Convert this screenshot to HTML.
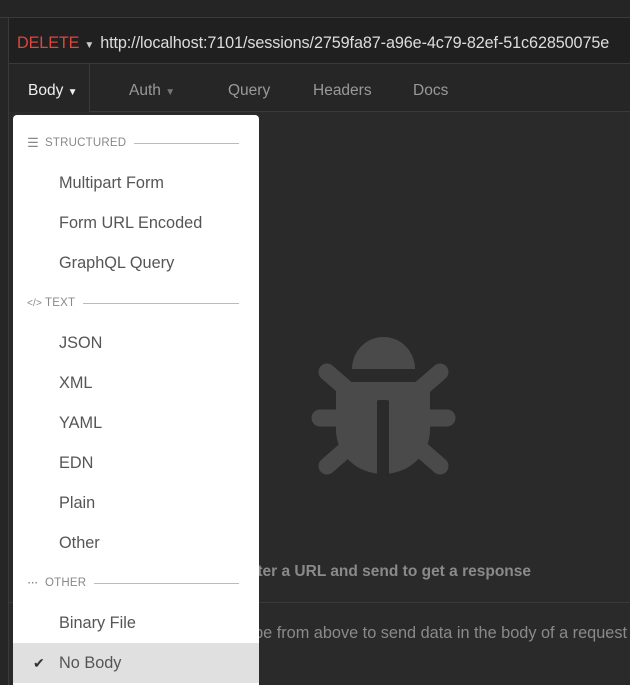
<!DOCTYPE html>
<html><head><meta charset="utf-8"><style>
*{margin:0;padding:0;box-sizing:border-box}
body{width:630px;height:685px;overflow:hidden;background:#2a2a2a;font-family:"Segoe UI","Liberation Sans",sans-serif;position:relative}
.top{position:absolute;left:0;top:0;width:630px;height:18px;background:#252525;border-bottom:1px solid #3a3a3a}
.side{position:absolute;left:0;top:18px;width:9px;height:667px;background:#262626;border-right:1px solid #3a3a3a}
.url{position:absolute;left:9px;top:18px;right:0;height:46px;background:#202020;border-bottom:1px solid #3a3a3a;color:#ddd;font-size:16.2px;line-height:50px;padding-left:8px;white-space:nowrap;letter-spacing:-0.1px}
.url .m{color:#e0453f;margin-right:5px}
.url .c{color:#ccc;font-size:10px;margin-right:6px}
.tabs{position:absolute;left:9px;top:64px;right:0;height:48px;background:#262626}
.tab{position:absolute;top:0;height:48px;line-height:54px;font-size:15.5px;color:#999}
.bline{position:absolute;left:89px;right:0;top:111px;height:1px;background:#3a3a3a}
.msg1{position:absolute;right:99px;top:563px;font-size:15.5px;font-weight:bold;color:#8a8a8a;white-space:nowrap}
.hr{position:absolute;left:9px;right:0;top:602px;height:1px;background:#3a3a3a}
.msg2{position:absolute;right:3px;top:624px;font-size:16.3px;color:#8a8a8a;white-space:nowrap}
.dd{position:absolute;left:13px;top:115px;width:246px;height:570px;background:#fff;border-radius:4px 4px 0 0;padding-top:8px}
.h{height:40px;display:flex;align-items:center;padding-left:14px;font-size:11.5px;color:#888;letter-spacing:.2px}
.h .i{width:12px;margin-right:6px;color:#888;font-size:10px;text-align:center}
.h .l{flex:1;height:1px;background:#bbb;margin:0 20px 0 8px}
.it{height:40px;line-height:41px;padding-left:46px;font-size:16.3px;color:#555}
.sel{background:#e0e0e0;position:relative}
.sel:before{content:"✔";position:absolute;left:20px;color:#333;font-size:14px}
</style></head><body>
<div class="top"></div>
<div class="side"></div>
<div class="url"><span class="m">DELETE</span><span class="c">▼</span>http://localhost:7101/sessions/2759fa87-a96e-4c79-82ef-51c62850075e</div>
<div class="tabs">
<div style="position:absolute;left:80px;top:0;width:1px;height:48px;background:#3a3a3a"></div>
<div class="tab" style="left:19px;color:#eee">Body <span style="font-size:10px">▼</span></div>
<div class="tab" style="left:120px">Auth <span style="font-size:10px;color:#777">▼</span></div>
<div class="tab" style="left:219px">Query</div>
<div class="tab" style="left:304px">Headers</div>
<div class="tab" style="left:404px">Docs</div>
</div>
<div class="bline"></div>
<svg style="position:absolute;left:300px;top:320px" width="170" height="170" viewBox="0 0 170 170">
<g fill="#4a4a4a" stroke="#4a4a4a" stroke-linecap="round" stroke-width="17">
<path d="M52 49 A31.5 32 0 0 1 115 49 Z" stroke="none"/>
<line x1="27" y1="52" x2="50" y2="72"/><line x1="140" y1="52" x2="117" y2="72"/>
<line x1="20" y1="98" x2="45" y2="98"/><line x1="147" y1="98" x2="122" y2="98"/>
<line x1="27" y1="146" x2="50" y2="126"/><line x1="140" y1="146" x2="117" y2="126"/>
<path d="M36 62 H130 V110 A47 44 0 0 1 36 110 Z" stroke="none"/>
</g>
<rect x="77" y="80" width="12" height="75" rx="2" fill="#2a2a2a"/>
</svg>
<div class="msg1">Enter a URL and send to get a response</div>
<div class="hr"></div>
<div class="msg2">Select a body type from above to send data in the body of a request</div>
<div class="dd">
<div class="h"><span class="i" style="font-size:13px">☰</span>STRUCTURED<span class="l"></span></div>
<div class="it">Multipart Form</div>
<div class="it">Form URL Encoded</div>
<div class="it">GraphQL Query</div>
<div class="h"><span class="i">&lt;/&gt;</span>TEXT<span class="l"></span></div>
<div class="it">JSON</div>
<div class="it">XML</div>
<div class="it">YAML</div>
<div class="it">EDN</div>
<div class="it">Plain</div>
<div class="it">Other</div>
<div class="h"><span class="i" style="font-weight:bold">···</span>OTHER<span class="l"></span></div>
<div class="it">Binary File</div>
<div class="it sel">No Body</div>
</div>
</body></html>
